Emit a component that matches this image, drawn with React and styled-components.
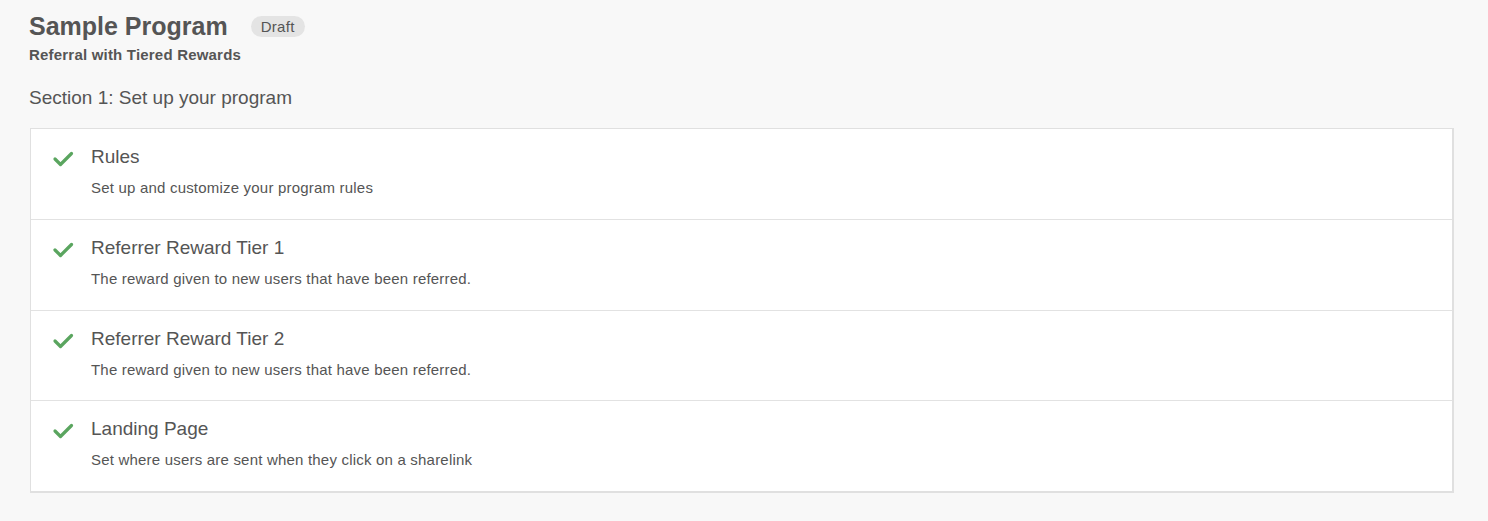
import styled, { createGlobalStyle } from "styled-components";

const GlobalStyle = createGlobalStyle`
  body {
    margin: 0;
    background: #f8f8f8;
    font-family: "Liberation Sans", Arial, sans-serif;
    color: #555;
  }
`;

const steps = [
  { title: "Rules", text: "Set up and customize your program rules" },
  {
    title: "Referrer Reward Tier 1",
    text: "The reward given to new users that have been referred.",
  },
  {
    title: "Referrer Reward Tier 2",
    text: "The reward given to new users that have been referred.",
  },
  {
    title: "Landing Page",
    text: "Set where users are sent when they click on a sharelink",
  },
];

function Check() {
  return (
    <svg width="22" height="16" viewBox="0 0 22 16">
      <polyline
        points="3,8 8.5,13.5 19.5,2.5"
        fill="none"
        stroke="#5aa55f"
        strokeWidth="3.2"
        strokeLinecap="round"
        strokeLinejoin="round"
      />
    </svg>
  );
}

export default function App() {
  return (
    <>
      <GlobalStyle />
      <Page>
        <Header>
          <Title>Sample Program</Title>
          <Badge>Draft</Badge>
        </Header>
        <Subtitle>Referral with Tiered Rewards</Subtitle>
        <SectionTitle>Section 1: Set up your program</SectionTitle>
        <Card>
          {steps.map((s) => (
            <Step key={s.title}>
              <IconBox>
                <Check />
              </IconBox>
              <div>
                <StepTitle>{s.title}</StepTitle>
                <StepText>{s.text}</StepText>
              </div>
            </Step>
          ))}
        </Card>
      </Page>
    </>
  );
}

const Page = styled.div`
  padding: 11px 34px 20px 29px;
`;

const Header = styled.div`
  display: flex;
  align-items: center;
  gap: 23px;
`;

const Title = styled.h1`
  margin: 0;
  font-size: 25px;
  line-height: 30px;
  font-weight: bold;
  color: #555;
`;

const Badge = styled.span`
  background: #e4e4e4;
  border-radius: 11px;
  font-size: 15px;
  line-height: 21px;
  padding: 0 10px;
  color: #555;
  letter-spacing: 0.3px;
`;

const Subtitle = styled.div`
  font-size: 15px;
  font-weight: bold;
  line-height: 18px;
  letter-spacing: 0.2px;
  margin-top: 5px;
`;

const SectionTitle = styled.h2`
  margin: 23px 0 0;
  font-size: 19px;
  font-weight: normal;
  line-height: 22px;
  color: #555;
`;

const Card = styled.div`
  margin: 19px 0 0 1px;
  background: #fff;
  border: 2px solid #e0e0e0;
  border-top-width: 1px;
  border-left-width: 1px;
`;

const Step = styled.div`
  display: flex;
  align-items: flex-start;
  padding: 16px 20px 0 21px;
  border-top: 1px solid #e2e2e2;
  height: 90.7px;
  box-sizing: border-box;

  &:first-child {
    border-top: none;
    height: 90px;
  }
`;

const IconBox = styled.div`
  width: 39px;
  padding-top: 6px;
  flex-shrink: 0;
`;

const StepTitle = styled.div`
  font-size: 19px;
  line-height: 24px;
`;

const StepText = styled.div`
  font-size: 15px;
  line-height: 18px;
  letter-spacing: 0.2px;
  margin-top: 10px;
`;
